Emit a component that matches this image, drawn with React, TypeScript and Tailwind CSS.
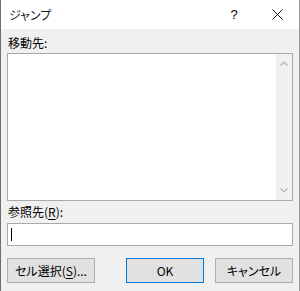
import React from "react";

export default function App() {
  const font = "font-['Noto_Sans_CJK_JP','Noto_Sans',sans-serif] [font-feature-settings:'palt']";
  return (
    <div className={`w-[300px] h-[291px] flex flex-col border-l border-l-[#6e6e6e] border-r border-r-[#9a9a9a] bg-[#f0f0f0] text-black text-[12px] ${font}`}>
      {/* title bar */}
      <div className="h-[29px] bg-white flex items-center shrink-0">
        <span className="pl-[8px] text-[12px] leading-[16px] text-[#1a1a1a]">ジャンプ</span>
        <div className="flex-1" />
        <span className="w-[20px] text-center text-[13px] leading-[16px] font-['Liberation_Sans',sans-serif] mr-[28px]">?</span>
        <svg width="11" height="11" viewBox="0 0 11 11" className="mr-[16px]">
          <path d="M0.5 0.5 L10.5 10.5 M10.5 0.5 L0.5 10.5" stroke="#111" strokeWidth="1" fill="none" />
        </svg>
      </div>
      {/* body */}
      <div className="flex-1 flex flex-col px-[6px]">
        <div className="pt-[6px] pb-[2px] leading-[16px] pl-[1px]">移動先:</div>
        <div className="h-[148px] border border-[#a9a9a9] bg-white flex">
          <div className="flex-1" />
          <div className="w-[16px] bg-[#f0f0f0] flex flex-col items-center justify-between py-[7px]">
            <svg width="8" height="5" viewBox="0 0 8 5">
              <path d="M0.5 4.5 L4 1 L7.5 4.5" stroke="#b4b4b4" strokeWidth="1.2" fill="none" />
            </svg>
            <svg width="8" height="5" viewBox="0 0 8 5">
              <path d="M0.5 0.5 L4 4 L7.5 0.5" stroke="#b4b4b4" strokeWidth="1.2" fill="none" />
            </svg>
          </div>
        </div>
        <div className="mt-[3px] mb-[3px] leading-[16px] pl-[1px]">
          参照先(<span className="underline underline-offset-2">R</span>):
        </div>
        <div className="h-[23px] border border-[#a9a9a9] bg-white flex items-center pl-[3px]">
          <div className="w-[1px] h-[13px] bg-black" />
        </div>
        <div className="mt-[12px] flex items-center">
          <div className="w-[88px] h-[25px] border border-[#adadad] bg-[#e1e1e1] flex items-center justify-center leading-[16px]">
            セル選択(<span className="underline underline-offset-2">S</span>)...
          </div>
          <div className="flex-1" />
          <div className="w-[78px] h-[25px] border border-[#0078d7] bg-[#e1e1e1] flex items-center justify-center leading-[16px]">
            OK
          </div>
          <div className="w-[11px]" />
          <div className="w-[78px] h-[25px] border border-[#adadad] bg-[#e1e1e1] flex items-center justify-center leading-[16px]">
            キャンセル
          </div>
        </div>
      </div>
    </div>
  );
}
